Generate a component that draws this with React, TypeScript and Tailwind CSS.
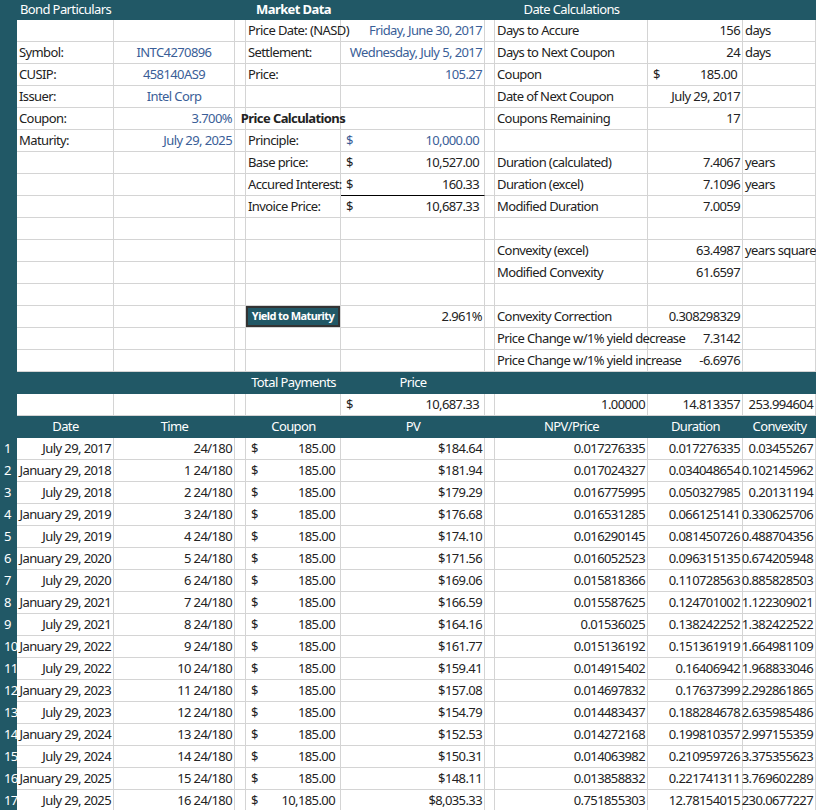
import React from "react";

type C = { t?: string; a?: "l" | "r" | "c"; blue?: boolean; bold?: boolean; usd?: boolean; ul?: boolean; btn?: boolean };

const cols = "grid grid-cols-[17px_97px_121px_11px_95px_144px_10px_153px_95px_73px]";
const TEAL = "bg-[#215866]";

function Cell({ c }: { c: C }) {
  const color = c.blue ? "text-[#3a5e97]" : "text-[#222]";
  if (c.btn) {
    return (
      <div className="h-[22px] border-r border-b border-[#d4d4d4] flex items-stretch">
        <div className={`${TEAL} flex-1 border-2 border-[#333] flex items-center justify-center text-white font-bold text-[11px] tracking-[-0.6px] whitespace-nowrap font-['Open_Sans',sans-serif]`}>
          {c.t}
        </div>
      </div>
    );
  }
  if (c.usd) {
    return (
      <div className={`h-[22px] border-r border-b ${c.ul ? "border-b-black" : "border-b-[#d4d4d4]"} border-r-[#d4d4d4] flex items-center justify-between px-[5px] ${color}`}>
        <span>$</span>
        <span>{c.t}</span>
      </div>
    );
  }
  const j = c.a === "r" ? "justify-end" : c.a === "c" ? "justify-center" : "justify-start";
  return (
    <div className={`h-[22px] border-r border-b border-[#d4d4d4] flex items-center px-[2px] whitespace-nowrap ${j} ${color} ${c.bold ? "font-bold" : ""}`}>
      {c.t}
    </div>
  );
}

function Row({ cells, num }: { cells: C[]; num?: string }) {
  const full = [...cells];
  while (full.length < 9) full.push({});
  return (
    <div className={`${cols} h-[22px]`}>
      <div className={`${TEAL} text-white flex items-center pl-[4px]`}>{num}</div>
      {full.map((c, i) => (
        <Cell key={i} c={c} />
      ))}
    </div>
  );
}

function TealRow({ cells }: { cells: { col: number; t: string }[] }) {
  const arr: (string | null)[] = Array(10).fill(null);
  cells.forEach((c) => {
    arr[c.col] = c.t;
  });
  return (
    <div className={`${cols} ${TEAL} h-[22px] text-white`}>
      {arr.map((t, i) => (
        <div key={i} className="flex items-center justify-center whitespace-nowrap">
          {t}
        </div>
      ))}
    </div>
  );
}

const pv = ["184.64","181.94","179.29","176.68","174.10","171.56","169.06","166.59","164.16","161.77","159.41","157.08","154.79","152.53","150.31","148.11","8,035.33"];
const npv = ["0.017276335","0.017024327","0.016775995","0.016531285","0.016290145","0.016052523","0.015818366","0.015587625","0.01536025","0.015136192","0.014915402","0.014697832","0.014483437","0.014272168","0.014063982","0.013858832","0.751855303"];
const dur = ["0.017276335","0.034048654","0.050327985","0.066125141","0.081450726","0.096315135","0.110728563","0.124701002","0.138242252","0.151361919","0.16406942","0.17637399","0.188284678","0.199810357","0.210959726","0.221741311","12.78154015"];
const conv = ["0.03455267","0.102145962","0.20131194","0.330625706","0.488704356","0.674205948","0.885828503","1.122309021","1.382422522","1.664981109","1.968833046","2.292861865","2.635985486","2.997155359","3.375355623","3.769602289","230.0677227"];

export default function App() {
  const top: C[][] = [
    [{}, {}, {}, { t: "Price Date: (NASD)" }, { t: "Friday, June 30, 2017", a: "r", blue: true }, {}, { t: "Days to Accure" }, { t: "156", a: "r" }, { t: "days" }],
    [{ t: "Symbol:" }, { t: "INTC4270896", a: "c", blue: true }, {}, { t: "Settlement:" }, { t: "Wednesday, July 5, 2017", a: "r", blue: true }, {}, { t: "Days to Next Coupon" }, { t: "24", a: "r" }, { t: "days" }],
    [{ t: "CUSIP:" }, { t: "458140AS9", a: "c", blue: true }, {}, { t: "Price:" }, { t: "105.27", a: "r", blue: true }, {}, { t: "Coupon" }, { t: "185.00", usd: true }, {}],
    [{ t: "Issuer:" }, { t: "Intel Corp", a: "c", blue: true }, {}, {}, {}, {}, { t: "Date of Next Coupon" }, { t: "July 29, 2017", a: "r" }, {}],
    [{ t: "Coupon:" }, { t: "3.700%", a: "r", blue: true }, {}, { t: "Price Calculations", bold: true, a: "c" }, {}, {}, { t: "Coupons Remaining" }, { t: "17", a: "r" }, {}],
    [{ t: "Maturity:" }, { t: "July 29, 2025", a: "r", blue: true }, {}, { t: "Principle:" }, { t: "10,000.00", usd: true, blue: true }, {}, {}, {}, {}],
    [{}, {}, {}, { t: "Base price:" }, { t: "10,527.00", usd: true }, {}, { t: "Duration (calculated)" }, { t: "7.4067", a: "r" }, { t: "years" }],
    [{}, {}, {}, { t: "Accured Interest:" }, { t: "160.33", usd: true, ul: true }, {}, { t: "Duration (excel)" }, { t: "7.1096", a: "r" }, { t: "years" }],
    [{}, {}, {}, { t: "Invoice Price:" }, { t: "10,687.33", usd: true }, {}, { t: "Modified Duration" }, { t: "7.0059", a: "r" }, {}],
    [],
    [{}, {}, {}, {}, {}, {}, { t: "Convexity (excel)" }, { t: "63.4987", a: "r" }, { t: "years squared" }],
    [{}, {}, {}, {}, {}, {}, { t: "Modified Convexity" }, { t: "61.6597", a: "r" }, {}],
    [],
    [{}, {}, {}, { t: "Yield to Maturity", btn: true }, { t: "2.961%", a: "r" }, {}, { t: "Convexity Correction" }, { t: "0.308298329", a: "r" }, {}],
    [{}, {}, {}, {}, {}, {}, { t: "Price Change w/1% yield decrease" }, { t: "7.3142", a: "r" }, {}],
    [{}, {}, {}, {}, {}, {}, { t: "Price Change w/1% yield increase" }, { t: "-6.6976", a: "r" }, {}],
  ];

  return (
    <div className="w-[816px] h-[810px] bg-white overflow-hidden text-[13px] tracking-[-0.6px] font-['Liberation_Serif',serif]">
      <div className={`${cols} ${TEAL} h-[20px] text-white`}>
        <div />
        <div className="flex items-center justify-center whitespace-nowrap">Bond Particulars</div>
        <div />
        <div />
        <div className="flex items-center justify-center font-bold whitespace-nowrap">Market Data</div>
        <div />
        <div />
        <div className="flex items-center justify-center whitespace-nowrap">Date Calculations</div>
        <div />
        <div />
      </div>
      {top.map((r, i) => (
        <Row key={i} cells={r} />
      ))}
      <TealRow cells={[{ col: 4, t: "Total Payments" }, { col: 5, t: "Price" }]} />
      <Row cells={[{}, {}, {}, {}, { t: "10,687.33", usd: true }, {}, { t: "1.00000", a: "r" }, { t: "14.813357", a: "r" }, { t: "253.994604", a: "r" }]} />
      <TealRow cells={[{ col: 1, t: "Date" }, { col: 2, t: "Time" }, { col: 4, t: "Coupon" }, { col: 5, t: "PV" }, { col: 7, t: "NPV/Price" }, { col: 8, t: "Duration" }, { col: 9, t: "Convexity" }]} />
      {pv.map((p, i) => {
        const year = 2017 + Math.ceil(i / 2);
        const date = i % 2 === 0 ? `July 29, ${year}` : `January 29, ${year}`;
        return (
          <Row
            key={i}
            num={String(i + 1)}
            cells={[
              { t: date, a: "r" },
              { t: i === 0 ? "24/180" : `${i} 24/180`, a: "r" },
              {},
              { t: i === 16 ? "10,185.00" : "185.00", usd: true },
              { t: `$${p}`, a: "r" },
              {},
              { t: npv[i], a: "r" },
              { t: dur[i], a: "r" },
              { t: conv[i], a: "r" },
            ]}
          />
        );
      })}
    </div>
  );
}
